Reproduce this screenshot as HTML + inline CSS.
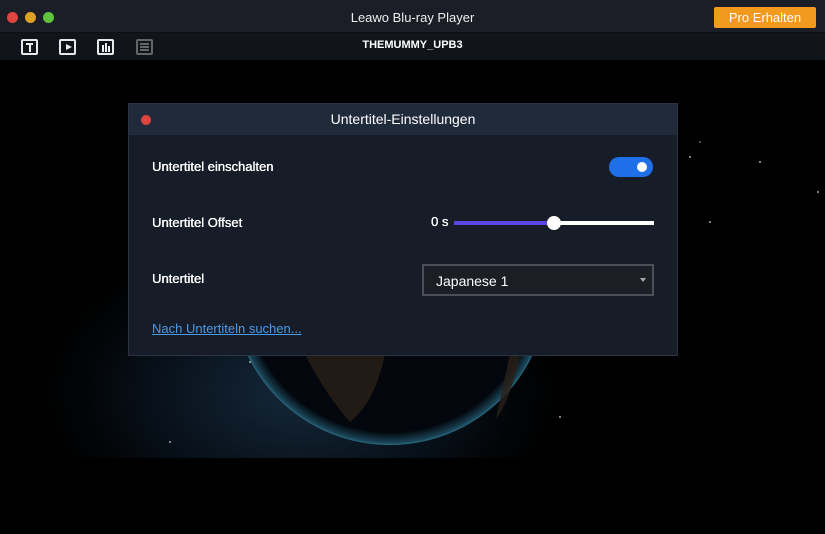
<!DOCTYPE html>
<html><head><meta charset="utf-8"><style>
*{margin:0;padding:0;box-sizing:border-box}
body{width:825px;height:534px;background:#000;font-family:"Liberation Sans",sans-serif;position:relative;overflow:hidden;color:#fff}
.title{position:absolute;left:0;top:0;width:825px;height:33px;background:#1b1e26;border-bottom:1px solid #0d0f14}
.tool{position:absolute;left:0;top:33px;width:825px;height:27px;background:#11141b}
.dot{position:absolute;top:12px;width:11px;height:11px;border-radius:50%}
.video{position:absolute;left:0;top:62px;width:825px;height:396px;background:radial-gradient(ellipse 260px 160px at 300px 330px,#15283a 0%,#08111b 55%,#020406 85%,#000 100%),#000;overflow:hidden}
.ic{position:absolute;top:39px;width:17px;height:16px;border:2px solid #e8e8e8;border-radius:2px}
.dlg{position:absolute;left:128px;top:103px;width:550px;height:253px;background:#171d28;border:1px solid #2a3342}
.hd{height:31px;background:#1f2a3b;text-align:center;font-size:14px;line-height:31px}
.lbl{position:absolute;left:23px;font-size:13px;text-shadow:0 0 0.4px #fff,0.3px 0 0 #fff}
</style></head><body>
<div class="title">
<div class="dot" style="left:7px;background:#e0443e"></div>
<div class="dot" style="left:25px;background:#dea123"></div>
<div class="dot" style="left:43px;background:#5fc33c"></div>
<div style="position:absolute;left:0;width:825px;top:10px;text-align:center;font-size:13px;color:#eee">Leawo Blu-ray Player</div>
<div style="position:absolute;left:714px;top:7px;width:102px;height:21px;background:#f29a1d;border-radius:2px;text-align:center;font-size:13px;line-height:21px">Pro Erhalten</div>
</div>
<div class="tool"><div style="position:absolute;left:0;width:825px;top:6px;text-align:center;font-size:11px;font-weight:bold">THEMUMMY_UPB3</div></div>
<div class="ic" style="left:21px"><div style="position:absolute;left:3px;top:2px;width:7px;height:2px;background:#eee"></div><div style="position:absolute;left:5.5px;top:2px;width:2px;height:9px;background:#eee"></div></div>
<div class="ic" style="left:59px"><div style="position:absolute;left:5px;top:3px;border-left:6px solid #eee;border-top:3.5px solid transparent;border-bottom:3.5px solid transparent"></div></div>
<div class="ic" style="left:97px"><div style="position:absolute;left:3px;top:4px;width:2px;height:7px;background:#eee"></div><div style="position:absolute;left:6px;top:2px;width:2px;height:9px;background:#eee"></div><div style="position:absolute;left:9px;top:5px;width:2px;height:6px;background:#eee"></div></div>
<div class="ic" style="left:136px;border-color:#666"><div style="position:absolute;left:2px;top:2px;width:9px;height:8px;border-top:2px solid #666;border-bottom:2px solid #666"></div><div style="position:absolute;left:2px;top:5px;width:9px;height:2px;background:#666"></div></div>
<div class="video">
<svg width="825" height="396" style="position:absolute;left:0;top:0">
<defs><radialGradient id="g" cx="0.5" cy="0.5" r="0.5"><stop offset="0.92" stop-color="#03070d"/><stop offset="0.985" stop-color="#1a4456"/><stop offset="1" stop-color="#2a6a80"/></radialGradient></defs>
<circle cx="390" cy="225" r="158" fill="url(#g)"/>
<path d="M305 292 q20 40 45 68 q25 -20 35 -68z" fill="#2a1f16" opacity="0.8"/>
<path d="M510 292 q-8 35 -14 65 q15 -20 24 -65z" fill="#2a1f16" opacity="0.8"/>
<g fill="#9ab">
<circle cx="690" cy="95" r="1"/><circle cx="760" cy="100" r="1"/><circle cx="818" cy="130" r="1"/><circle cx="710" cy="160" r="1"/><circle cx="250" cy="300" r="1"/><circle cx="560" cy="355" r="1"/><circle cx="700" cy="80" r="0.8"/><circle cx="170" cy="380" r="1"/><circle cx="428" cy="285" r="1"/></g>
</svg>
</div>
<div class="dlg">
<div class="hd">Untertitel-Einstellungen</div>
<div style="position:absolute;left:12px;top:11px;width:10px;height:10px;border-radius:50%;background:#e0443e"></div>
<div class="lbl" style="top:55px">Untertitel einschalten</div>
<div style="position:absolute;left:480px;top:53px;width:44px;height:20px;border-radius:10px;background:#1f6fe8"><div style="position:absolute;right:6px;top:5px;width:10px;height:10px;border-radius:50%;background:#fff"></div></div>
<div class="lbl" style="top:111px">Untertitel Offset</div>
<div class="lbl" style="left:302px;top:110px">0 s</div>
<div style="position:absolute;left:325px;top:117px;width:100px;height:4px;background:#5a45e6"></div>
<div style="position:absolute;left:425px;top:117px;width:100px;height:4px;background:#fff"></div>
<div style="position:absolute;left:418px;top:112px;width:14px;height:14px;border-radius:50%;background:#fff"></div>
<div class="lbl" style="top:167px">Untertitel</div>
<div style="position:absolute;left:293px;top:160px;width:232px;height:32px;border:2px solid #4a4f58;background:#1b1e25"><span style="position:absolute;left:12px;top:7px;font-size:14px">Japanese 1</span><span style="position:absolute;right:6px;top:12px;border-top:4px solid #aaa;border-left:3px solid transparent;border-right:3px solid transparent"></span></div>
<div style="position:absolute;left:23px;top:217px;font-size:13px;color:#4a9ae8;text-decoration:underline">Nach Untertiteln suchen...</div>
</div>
</body></html>
